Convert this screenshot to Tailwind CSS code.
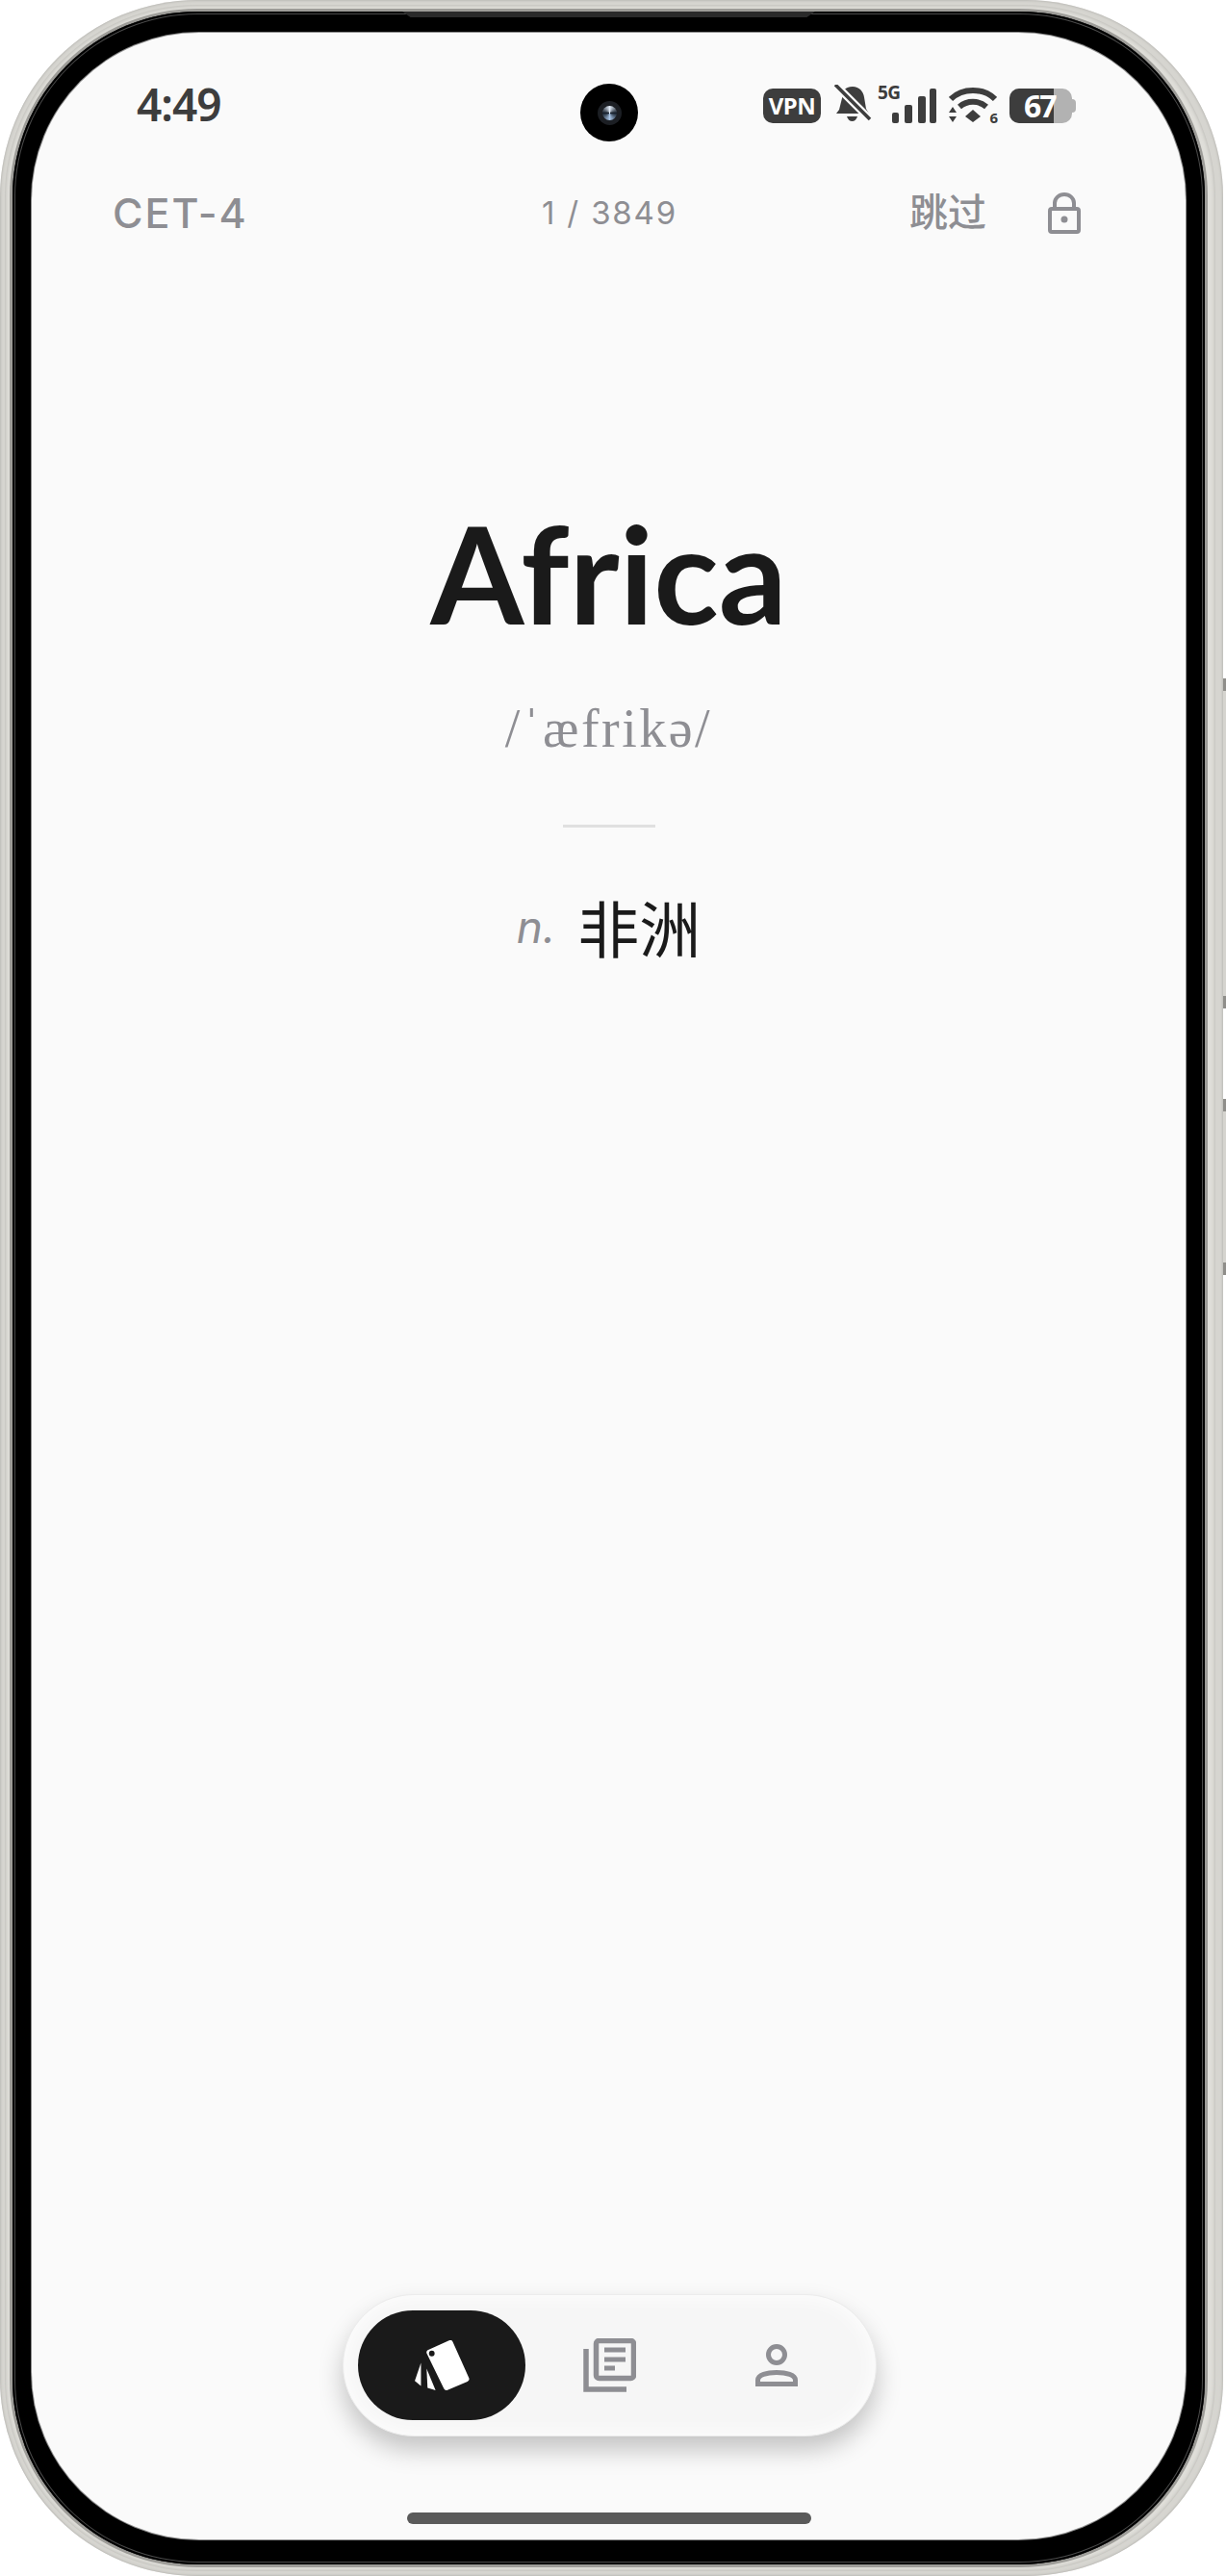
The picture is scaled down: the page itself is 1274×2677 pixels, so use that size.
<!DOCTYPE html>
<html lang="zh-CN">
<head>
    <meta charset="UTF-8">
    <meta name="viewport" content="width=device-width, initial-scale=1.0">
    <title>CET-4</title>
    <script src="https://cdn.jsdelivr.net/npm/@tailwindcss/browser@4"></script>
</head>
<body class="bg-white font-['Inter','Noto_Sans_CJK_SC',sans-serif]">
    <div class="relative w-[1274px] h-[2677px] overflow-hidden">
        <!-- side buttons -->
        <div class="absolute right-0 top-[705px] w-[4px] h-[343px] bg-[#d5d4cf] border-y-[13px] border-[#8f8e8a]"></div>
        <div class="absolute right-0 top-[1142px] w-[4px] h-[183px] bg-[#d5d4cf] border-y-[13px] border-[#8f8e8a]"></div>

        <!-- frame -->
        <div class="relative w-[1271px] h-[2677px] rounded-[205px] bg-[#d6d5d0] pt-[5px] pb-[5px] pl-[5px] pr-[8px] shadow-[inset_0_0_3px_#a3a29e]">
            <div class="w-full h-full rounded-[200px] bg-[#dfded9] pt-[4px] pb-[4px] pl-[5px] pr-[8px] shadow-[inset_0_0_4px_#adaca7]">
                <div class="w-full h-full rounded-[195px] bg-[#9d9c98] p-[3px]">
                    <div class="w-full h-full rounded-[192px] bg-black pt-[22px] px-[20px] pb-[26px] shadow-[inset_0_0_0_2px_#000000,inset_0_0_0_3px_#4a4a4a]">
                        <!-- screen -->
                        <div class="relative w-full h-full rounded-[174px] bg-[#fafafa] flex flex-col items-center overflow-hidden shadow-[0_0_0_1px_#8c8c8c]">
                            <!-- status bar -->
                            <div class="w-full h-[40px] mt-[54px] pl-[109px] pr-[114px] flex justify-between items-end">
                                <span class="text-[46px] leading-[40px] font-semibold text-[#3d3d3d] tracking-[-1px] font-['Noto_Sans',sans-serif]">4:49</span>
                                <div class="flex items-end gap-[13px] h-[40px]">
                                    <span class="w-[60px] h-[36px] rounded-[10px] bg-[#3d3d3d] text-white text-[24px] leading-[36px] font-bold text-center tracking-[-0.5px] font-['Noto_Sans',sans-serif]">VPN</span>
                                    <svg class="w-[40px] h-[40px] -mr-[7px]" viewBox="0 0 40 40" fill="#3d3d3d">
                                        <path d="M20 2c7 0 11 5 12 11l2 12 3 5H3l3-4 5-20c2-3 5-4 9-4z"/>
                                        <path d="M14 33h11c-1 3-3 5-5.500 5s-4.500-2-5.500-5z"/>
                                        <path d="M2 0 38 36" stroke="#fafafa" stroke-width="8"/>
                                        <path d="M2 0 38 36" stroke="#3d3d3d" stroke-width="3.500"/>
                                    </svg>
                                    <div class="relative w-[61px] h-[40px]">
                                        <span class="absolute left-0 top-[-3px] text-[19px] leading-[22px] font-bold text-[#3d3d3d] tracking-[-0.5px] font-['Noto_Sans',sans-serif]">5G</span>
                                        <svg class="absolute left-[15px] top-[4px] w-[46px] h-[36px]" viewBox="0 0 46 36" fill="#3d3d3d">
                                            <rect x="0" y="25" width="7" height="11" rx="2"/>
                                            <rect x="13" y="17" width="8" height="19" rx="2"/>
                                            <rect x="27" y="8" width="8" height="28" rx="2"/>
                                            <rect x="39" y="0" width="7" height="36" rx="2"/>
                                        </svg>
                                    </div>
                                    <div class="relative w-[50px] h-[38px]">
                                        <svg class="w-[50px] h-[38px]" viewBox="0 0 50 38" fill="none" stroke="#3d3d3d">
                                            <path d="M2 13C14 1 36 1 48 13" stroke-width="6"/>
                                            <path d="M11 21c8-7 20-7 28 0" stroke-width="6"/>
                                            <path d="M17 31 25 24 33 31 25 37z" fill="#3d3d3d" stroke="none"/>
                                            <path d="M0 27 4 21 8 27zM0 31 4 37 8 31z" fill="#3d3d3d" stroke="none"/>
                                        </svg>
                                        <span class="absolute right-[-1px] bottom-[-2px] text-[15px] leading-[15px] font-bold text-[#3d3d3d] font-['Noto_Sans',sans-serif]">6</span>
                                    </div>
                                    <div class="relative w-[69px] h-[36px]">
                                        <div class="absolute right-0 top-[11px] w-[6px] h-[14px] rounded-r-[4px] bg-[#b2b2b2]"></div>
                                        <div class="w-[65px] h-[36px] rounded-[10px] bg-[#b2b2b2]">
                                            <div class="w-[46px] h-[36px] rounded-l-[10px] bg-[#3d3d3d]"></div>
                                        </div>
                                        <span class="absolute left-[15px] top-0 text-[32px] leading-[36px] font-bold text-white tracking-[-2px] font-['Noto_Sans',sans-serif]">67</span>
                                    </div>
                                </div>
                            </div>

                            <!-- camera -->
                            <div class="absolute left-[570px] top-[53px] w-[60px] h-[60px] rounded-full bg-black flex items-center justify-center">
                                <div class="w-[25px] h-[25px] rounded-full bg-[#1c1f24] flex items-center justify-center">
                                    <div class="w-[15px] h-[15px] rounded-full bg-[conic-gradient(#e4eefa,#16202c,#a9c6e8,#16202c,#e4eefa)]"></div>
                                </div>
                            </div>

                            <!-- top row -->
                            <div class="w-full h-[44px] mt-[71px] px-[84px] grid grid-cols-[1fr_auto_1fr] items-center text-[#8e8e93]">
                                <span class="text-[43px] leading-[44px] font-medium tracking-[2px]">CET-4</span>
                                <span class="ml-[2px] text-[33px] leading-[44px] text-center tracking-[1.800px]">1 / 3849</span>
                                <div class="flex justify-end items-center gap-[64px] mr-[25px]">
                                    <span class="text-[40px] leading-[44px] font-medium">跳过</span>
                                    <svg class="w-[34px] h-[43px]" viewBox="0 0 34 43" fill="none" stroke="#8e8e93" stroke-width="4">
                                        <rect x="2" y="17" width="30" height="24" rx="2"/>
                                        <path d="M7 17V11a10 9 0 0 1 20 0v6"/>
                                        <circle cx="17" cy="28" r="3.500" fill="#8e8e93" stroke="none"/>
                                    </svg>
                                </div>
                            </div>

                            <!-- word -->
                            <h1 class="mt-[283px] text-[140px] leading-[139px] font-bold tracking-[0px] text-[#1a1a1a] font-['Lato',sans-serif]">Africa</h1>
                            <p class="mt-[60px] text-[56px] leading-[64px] tracking-[2.500px] text-[#8e8e93] font-['Liberation_Serif',serif]">/ˈæfrikə/</p>
                            <div class="mt-[68px] w-[96px] h-[3px] bg-[#e0e0e0]"></div>
                            <div class="mt-[69px] flex items-center gap-[23px]">
                                <span class="mt-[2px] text-[46px] leading-[64px] italic text-[#8e8e93]">n.</span>
                                <span class="text-[64px] leading-[64px] text-[#1a1a1a] font-['Noto_Sans_CJK_SC',sans-serif]">非洲</span>
                            </div>

                            <!-- bottom nav -->
                            <div class="mt-auto ml-[2px] w-[555px] h-[148px] rounded-full border border-[#ececec] bg-[#f6f6f6] shadow-[inset_0_0_22px_#ffffff,0_14px_26px_rgba(0,0,0,0.22)] px-[15px] flex items-center">
                                <div class="w-[174px] h-[114px] rounded-full bg-[#1a1a1a] flex items-center justify-center">
                                    <svg class="w-[59px] h-[53px]" viewBox="0 0 59 54" fill="#ffffff">
                                        <path d="M16 13 38 3 55 41 34 50z" stroke="#ffffff" stroke-width="6" stroke-linejoin="round"/>
                                        <circle cx="18.500" cy="14" r="3" fill="#1a1a1a"/>
                                        <path d="M7 24 0.500 43 7 48.500z"/>
                                        <path d="M13 30 14 50.500 22.500 53z"/>
                                    </svg>
                                </div>
                                <div class="w-[174px] flex justify-center">
                                    <svg class="w-[55px] h-[56px]" viewBox="0 0 55 56" fill="none" stroke="#8e8e93" stroke-width="5.500">
                                        <rect x="13.500" y="2.500" width="39" height="39" rx="3"/>
                                        <path d="M3 11V53H45"/>
                                        <path d="M22 12h22M22 22h22M22 31h11" stroke-width="5"/>
                                    </svg>
                                </div>
                                <div class="w-[174px] flex justify-center">
                                    <svg class="w-[44px] h-[44px]" viewBox="0 0 44 44" fill="none" stroke="#8e8e93" stroke-width="5">
                                        <circle cx="22" cy="11" r="8.500"/>
                                        <path d="M2.500 41.500v-4C2.500 32 12 29.500 22 29.500s19.500 2.500 19.500 8v4z"/>
                                    </svg>
                                </div>
                            </div>

                            <!-- home bar -->
                            <div class="mt-[79px] mb-[16px] w-[420px] h-[12px] rounded-full bg-[#5a5a5a]"></div>
                        </div>
                    </div>
                </div>
            </div>

            <!-- earpiece -->
            <div class="absolute left-[418px] top-[12px] w-[429px] h-[6px] bg-[#2a2a2a] [clip-path:polygon(0_0,100%_0,98%_100%,2%_100%)]"></div>
        </div>
    </div>
</body>
</html>
